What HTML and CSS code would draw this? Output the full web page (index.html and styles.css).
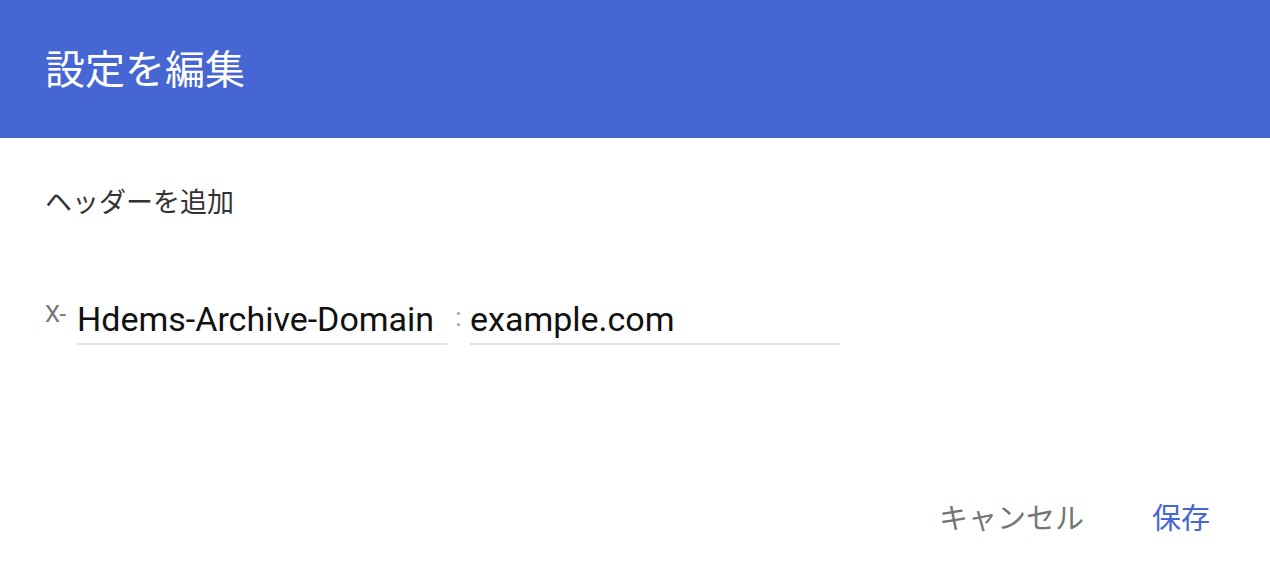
FILE: index.html
```html
<!DOCTYPE html>
<html lang="ja">
<head>
<meta charset="utf-8">
<link rel="stylesheet" href="styles.css">
</head>
<body>
<div class="dialog">
  <header class="dialog-header">
    <h1 class="dialog-title">設定を編集</h1>
  </header>
  <main class="dialog-body">
    <p class="section-label">ヘッダーを追加</p>
    <div class="header-row">
      <span class="prefix">X-</span>
      <div class="field field-name"><span class="field-text">Hdems-Archive-Domain</span></div>
      <span class="colon">:</span>
      <div class="field field-value"><span class="field-text">example.com</span></div>
    </div>
  </main>
  <footer class="dialog-actions">
    <button class="btn btn-cancel">キャンセル</button>
    <button class="btn btn-save">保存</button>
  </footer>
</div>
</body>
</html>
```

FILE: styles.css
```css
html, body {
  margin: 0;
  padding: 0;
  background: #ffffff;
}
body {
  font-family: Roboto, "Noto Sans CJK JP", sans-serif;
  width: 1270px;
  height: 562px;
  overflow: hidden;
}
.dialog {
  display: flex;
  flex-direction: column;
  height: 562px;
}
.dialog-header {
  background: #4666d4;
  height: 138px;
  display: flex;
  align-items: center;
  padding: 0 45px;
  box-sizing: border-box;
}
.dialog-title {
  margin: 0;
  color: #ffffff;
  font-family: "Noto Sans CJK JP", sans-serif;
  font-weight: 400;
  font-size: 40px;
  line-height: 1;
  padding-bottom: 4px;
}
.dialog-body {
  padding: 0 45px;
  flex: 1;
}
.section-label {
  margin: 0;
  padding-top: 45px;
  font-family: "Noto Sans CJK JP", sans-serif;
  font-size: 27px;
  line-height: 36px;
  color: #333333;
}
.header-row {
  display: flex;
  align-items: flex-end;
  margin-top: 75px;
}
.prefix {
  font-size: 24px;
  color: #757575;
  line-height: 40px;
  width: 32px;
  padding-bottom: 11px;
}
.field {
  width: 370px;
  border-bottom: 2px solid #e0e0e0;
  padding-bottom: 4px;
}
.field-text {
  font-size: 34px;
  line-height: 40px;
  color: #111111;
}
.colon {
  width: 23px;
  text-align: center;
  color: #9e9e9e;
  font-size: 26px;
  line-height: 40px;
  padding-bottom: 8px;
}
.dialog-actions {
  display: flex;
  justify-content: flex-end;
  gap: 68px;
  padding: 0 60px 26px 0;
}
.btn {
  background: none;
  border: 0;
  padding: 0;
  font-family: "Noto Sans CJK JP", sans-serif;
  font-size: 29px;
  line-height: 40px;
  cursor: pointer;
}
.btn-cancel { color: #757575; }
.btn-save { color: #4666d4; }
```
